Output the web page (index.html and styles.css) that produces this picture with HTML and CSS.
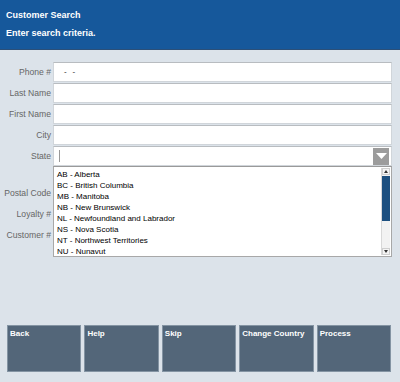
FILE: index.html
```
<!DOCTYPE html>
<html>
<head>
<meta charset="utf-8">
<link rel="stylesheet" href="styles.css">
</head>
<body>
<div class="header">
  <div class="title">Customer Search</div>
  <div class="subtitle">Enter search criteria.</div>
</div>
<div class="form">
  <div class="row"><label>Phone #</label><div class="input phone">-&nbsp;&nbsp;-</div></div>
  <div class="row"><label>Last Name</label><div class="input"></div></div>
  <div class="row"><label>First Name</label><div class="input"></div></div>
  <div class="row"><label>City</label><div class="input"></div></div>
  <div class="row state"><label>State</label>
    <div class="input select"><span class="caret"></span>
      <span class="arrow"><svg width="11" height="7" viewBox="0 0 11 7"><polygon points="0,0 11,0 5.5,6" fill="#fff"/></svg></span>
    </div>
    <div class="list">
      <div class="items">
        <div>AB - Alberta</div>
        <div>BC - British Columbia</div>
        <div>MB - Manitoba</div>
        <div>NB - New Brunswick</div>
        <div>NL - Newfoundland and Labrador</div>
        <div>NS - Nova Scotia</div>
        <div>NT - Northwest Territories</div>
        <div>NU - Nunavut</div>
      </div>
      <div class="scroll">
        <div class="sbtn"><svg width="4" height="3" viewBox="0 0 4 3"><polygon points="0,3 4,3 2,0" fill="#333"/></svg></div>
        <div class="track"><div class="thumb"></div></div>
        <div class="sbtn"><svg width="4" height="3" viewBox="0 0 4 3"><polygon points="0,0 4,0 2,3" fill="#333"/></svg></div>
      </div>
    </div>
  </div>
  <div class="row low"><label>Postal Code</label><div class="input"></div></div>
  <div class="row"><label>Loyalty #</label><div class="input"></div></div>
  <div class="row"><label>Customer #</label><div class="input"></div></div>
</div>
<div class="buttons">
  <div class="btn">Back</div>
  <div class="btn">Help</div>
  <div class="btn">Skip</div>
  <div class="btn">Change Country</div>
  <div class="btn">Process</div>
</div>
</body>
</html>
```
FILE: styles.css
```
html, body { margin: 0; padding: 0; }
body {
  width: 400px;
  height: 382px;
  background: #dce3ea;
  font-family: "Liberation Sans", Arial, sans-serif;
  overflow: hidden;
}
.header {
  height: 49px;
  background: #16589b;
  border-bottom: 1px solid #2b4f78;
  color: #fff;
  font-weight: bold;
  font-size: 9px;
  padding-left: 6px;
  box-sizing: content-box;
}
.title { padding-top: 10px; line-height: 11px; }
.subtitle { padding-top: 7px; line-height: 11px; }
.form {
  margin-top: 12px;
  display: flex;
  flex-direction: column;
  gap: 2px;
}
.row {
  display: flex;
  align-items: center;
  height: 19px;
  position: relative;
}
.row.low { margin-top: 16px; }
.row label {
  width: 51px;
  padding-right: 2px;
  text-align: right;
  font-size: 8.6px;
  color: #666;
}
.input {
  width: 337px;
  height: 18px;
  background: #fff;
  border: 1px solid #d0d5da;
  border-top-color: #b8bcc0;
  box-sizing: content-box;
  position: relative;
  display: flex;
  align-items: center;
}
.phone {
  font-size: 8px;
  color: #222;
  padding-left: 10px;
  width: 327px;
  letter-spacing: 0.5px;
}
.select .caret {
  width: 1px;
  height: 12px;
  background: #999;
  margin-left: 5px;
}
.select .arrow {
  position: absolute;
  right: 2px;
  top: 1px;
  width: 16px;
  height: 17px;
  background: #9c9c9c;
  display: flex;
  align-items: center;
  justify-content: center;
}
.list {
  position: absolute;
  left: 53px;
  top: 20px;
  width: 337px;
  height: 89px;
  background: #fff;
  border: 1px solid #a8a8a8;
  border-top-color: #9a9a9a;
  z-index: 5;
  display: flex;
}
.items {
  flex: 1;
  padding-top: 2px;
  padding-left: 3px;
  font-size: 8px;
  color: #000;
}
.items div { height: 11px; line-height: 11px; }
.scroll {
  width: 8px;
  margin: 1px 1px 1px 0;
  display: flex;
  flex-direction: column;
  background: #ececec;
  border-left: 1px solid #d8d8d8;
}
.sbtn {
  height: 7px;
  background: #f4f4f4;
  border: 1px solid #cfcfcf;
  box-sizing: border-box;
  display: flex;
  align-items: center;
  justify-content: center;
}
.track { flex: 1; background: #f2f2f2; }
.thumb {
  margin-top: 1px;
  height: 45px;
  background: #1d5080;
}
.buttons {
  position: absolute;
  left: 7px;
  top: 325px;
  width: 384px;
  display: flex;
  gap: 3px;
}
.btn {
  flex: 1;
  height: 47px;
  background: #536679;
  border: 1px solid #8494a3;
  box-sizing: border-box;
  color: #fff;
  font-weight: bold;
  font-size: 8px;
  padding: 3px 0 0 2px;
  line-height: 9px;
}
```
